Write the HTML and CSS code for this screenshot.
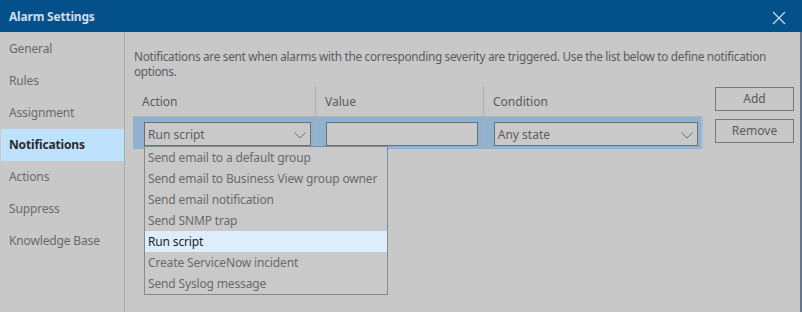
FILE: index.html
```html
<!DOCTYPE html>
<html>
<head>
<meta charset="utf-8">
<link rel="stylesheet" href="styles.css">
</head>
<body>
<div class="window">
  <div class="titlebar">
    <span class="title">Alarm Settings</span>
    <svg class="close" width="14" height="14" viewBox="0 0 14 14"><path d="M1 1 L13 13 M13 1 L1 13" stroke="#c9d5e2" stroke-width="1.4" fill="none"/></svg>
  </div>
  <div class="main">
    <nav class="sidebar">
      <div class="nav-item">General</div>
      <div class="nav-item">Rules</div>
      <div class="nav-item">Assignment</div>
      <div class="nav-item active">Notifications</div>
      <div class="nav-item">Actions</div>
      <div class="nav-item">Suppress</div>
      <div class="nav-item">Knowledge Base</div>
    </nav>
    <section class="content">
      <p class="desc">Notifications are sent when alarms with the corresponding severity are triggered. Use the list below to define notification options.</p>
      <div class="editor">
        <div class="grid">
          <div class="grid-head">
            <div class="col c1">Action</div>
            <div class="col c2">Value</div>
            <div class="col c3">Condition</div>
          </div>
          <div class="grid-row">
            <div class="cell c1">
              <div class="combo"><span>Run script</span><svg class="chev" width="12" height="7" viewBox="0 0 12 7"><path d="M0.5 0.5 L6 6 L11.5 0.5" stroke="#6c6c6c" stroke-width="1" fill="none"/></svg></div>
            </div>
            <div class="cell c2"><div class="input"></div></div>
            <div class="cell c3">
              <div class="combo"><span>Any state</span><svg class="chev" width="12" height="7" viewBox="0 0 12 7"><path d="M0.5 0.5 L6 6 L11.5 0.5" stroke="#6c6c6c" stroke-width="1" fill="none"/></svg></div>
            </div>
          </div>
        </div>
        <div class="buttons">
          <div class="btn">Add</div>
          <div class="btn">Remove</div>
        </div>
      </div>
      <ul class="dropdown">
        <li>Send email to a default group</li>
        <li>Send email to Business View group owner</li>
        <li>Send email notification</li>
        <li>Send SNMP trap</li>
        <li class="sel">Run script</li>
        <li>Create ServiceNow incident</li>
        <li>Send Syslog message</li>
      </ul>
    </section>
  </div>
</div>
</body>
</html>
```
FILE: styles.css
```css
* { box-sizing: border-box; }
html, body { margin: 0; padding: 0; }
body {
  width: 802px;
  height: 312px;
  overflow: hidden;
  background: #c8c8c8;
  font-family: "Noto Sans", "Open Sans", sans-serif;
  font-size: 12px;
  color: #5e5e5e;
}
.window {
  width: 802px;
  height: 312px;
  display: flex;
  flex-direction: column;
}
.titlebar {
  height: 32px;
  flex: none;
  background: #03508b;
  display: flex;
  align-items: center;
  justify-content: space-between;
  padding: 1px 16px 0 9px;
}
.title {
  color: #d3dce6;
  font-weight: bold;
  font-size: 12px;
  letter-spacing: -0.2px;
}
.close { display: block; margin-top: 2px; }
.main {
  flex: 1;
  display: flex;
  border-right: 2px solid #63748b;
}
.sidebar {
  width: 125px;
  flex: none;
  border-right: 1px solid #acacac;
  padding-top: 1px;
}
.nav-item {
  height: 32px;
  line-height: 32px;
  padding-left: 8px;
  margin-left: 1px;
  color: #6a6a6a;
  letter-spacing: -0.15px;
}
.nav-item.active {
  background: #bfe2fc;
  color: #2c2c2c;
  font-weight: bold;
}
.content {
  flex: 1;
  position: relative;
  padding: 17px 0 0 9px;
}
.desc {
  margin: 0;
  width: 650px;
  line-height: 15px;
  font-size: 11.8px;
  color: #5c5c5c;
  letter-spacing: -0.3px;
}
.editor {
  display: flex;
  align-items: flex-start;
  margin-top: 7px;
  margin-left: -1px;
}
.grid {
  width: 570px;
}
.grid-head {
  display: flex;
  height: 31px;
  border-bottom: 1px solid #b3b3b3;
}
.col {
  padding-left: 9px;
  line-height: 31px;
  color: #5a5a5a;
}
.c1 { width: 182px; }
.c2 { width: 168px; border-left: 1px solid #adadad; }
.c3 { width: 220px; border-left: 1px solid #adadad; }
.grid-row {
  display: flex;
  height: 32px;
  background: #8fb2d0;
  border-right: 2px solid #a6bed4;
}
.cell {
  padding: 5px 3px 0 11px;
}
.cell.c2 { padding-right: 4px; }
.cell.c3 { padding-right: 3px; }
.combo, .input {
  height: 24px;
  border: 1px solid #6e6e6e;
  background: #c9c9c9;
}
.combo {
  display: flex;
  align-items: center;
  justify-content: space-between;
  padding: 1px 4px 0 3px;
  color: #5d5d5d;
}
.chev { display: block; margin-top: 1px; }
.buttons {
  margin-left: 12px;
  margin-top: 1px;
  display: flex;
  flex-direction: column;
  gap: 8px;
}
.btn {
  width: 79px;
  height: 24px;
  border: 1px solid #777;
  text-align: center;
  line-height: 21px;
  color: #5a5a5a;
}
.dropdown {
  position: absolute;
  left: 19px;
  top: 114px;
  width: 244px;
  margin: 0;
  padding: 0;
  list-style: none;
  border: 1px solid #7f8a9c;
  background: #c9c9c9;
}
.dropdown li {
  height: 21px;
  line-height: 22px;
  padding-left: 3px;
  color: #6a6a6a;
  letter-spacing: -0.15px;
}
.dropdown li.sel {
  background: #dcedfb;
  color: #1e1e1e;
}
```
